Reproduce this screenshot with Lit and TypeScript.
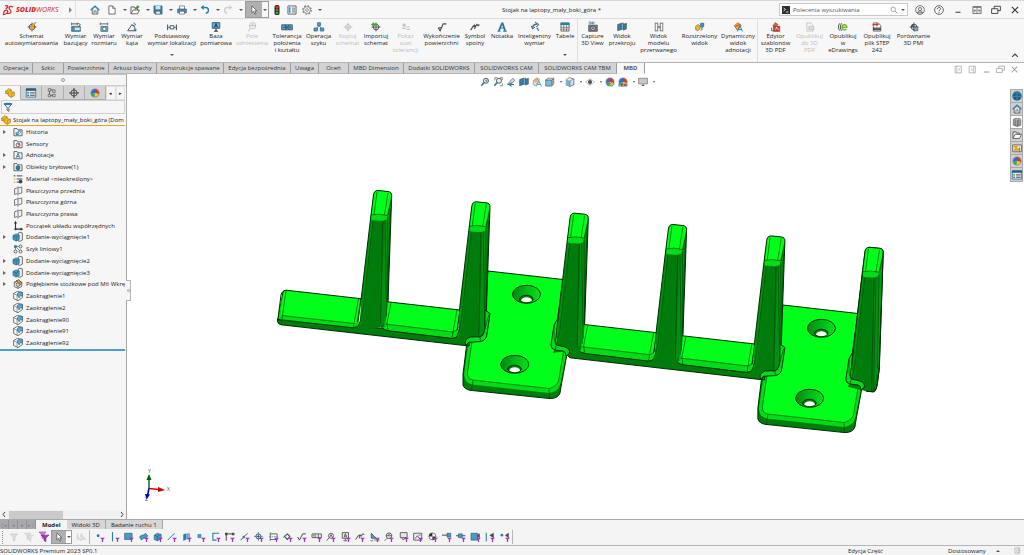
import { LitElement, html, svg, css, nothing } from "lit";
import { customElement, property, state } from "lit/decorators.js";

const D = "#4b4b4d";
const B = "#2b7ea6";
const L = "#8fc4de";
const Y = "#f3b72c";
const P = "#a435c4";
const G = "#b9b9bb";

const funnel = svg`<path d="M8 9h8l-3 3v4h-2v-4z" fill=${P}/>`;
const ball = svg`<circle cx="8" cy="8" r="6.5" fill="#e8e8e8"/><path d="M8 8V1.500A6.500 6.500 0 0 0 2 10z" fill="#2f6fd0"/><path d="M8 8V1.500A6.500 6.500 0 0 1 14 10z" fill="#e3322b"/><path d="M8 8l6 2a6.500 6.500 0 0 1-7 4.500z" fill="#f6c928"/><path d="M8 8l-1 6.500A6.500 6.500 0 0 1 2 10z" fill="#37a845"/><circle cx="8" cy="8" r="6.500" fill="none" stroke="#555" stroke-width=".8"/>`;
const magnifier = svg`<circle cx="9.500" cy="6" r="4" fill="#e8f3f9" stroke=${D} stroke-width="1.500"/><path d="M6.500 9L2 14" stroke=${B} stroke-width="2.500"/>`;
const folder = svg`<path d="M1.500 14V2.500h5l1.500 2h6.500V14z" fill="#f4f4f4" stroke=${D} stroke-width="1.300"/>`;
const cube = svg`<path d="M2 5l6-3 6 3v7l-6 3-6-3z" fill="#f1f1f1" stroke=${D} stroke-width="1.200"/><path d="M2 5l6 3 6-3M8 8v7" fill="none" stroke=${D}/>`;
const arrows = svg`<path d="M8 1v14M1 8h14" stroke=${D} stroke-width="1.500"/><circle cx="8" cy="8" r="4.500" fill="none" stroke=${D} stroke-width="1.500"/>`;
const page = svg`<path d="M3 1.500h6l4 4v9H3z" fill="#fafafa" stroke=${D} stroke-width="1.200"/><path d="M9 1.500v4h4" fill="none" stroke=${D}/>`;

const ICONS: Record<string, unknown> = {
  home: svg`<path d="M3.500 7v7.500h9V7" fill="#e6e6e6" stroke=${D} stroke-width="1.200"/><path d="M1 8.500L8 2l7 6.500" fill="none" stroke=${B} stroke-width="2.200"/><path d="M6.500 14.500V9.500h3v5" fill="#fff" stroke=${D}/>`,
  page,
  open: svg`<path d="M1.500 14V3h5l1 2H12v3" fill="#f4f4f4" stroke=${D} stroke-width="1.300"/><path d="M1.500 14L5 8h10l-3 6z" fill="#fff" stroke=${D} stroke-width="1.300"/><path d="M9 7c0-3 1-4 4-4M11 1l3 2-3 2.500" fill="none" stroke="#3a9b35" stroke-width="1.800"/>`,
  save: svg`<path d="M1.500 1.500h13v13h-11l-2-2z" fill=${B} stroke="#30566a"/><path d="M4 1.500h8V7H4z" fill="#cfe5f0"/><path d="M4.500 10h7v4.500h-7z" fill="#f2f2f2" stroke=${D} stroke-width=".8"/>`,
  print: svg`<path d="M4 1.500h8V7H4z" fill="#fff" stroke=${D}/><path d="M1 6.500h14v6H1z" fill="#3c91b9" stroke="#30566a"/><path d="M4 10h8v4.500H4z" fill="#fff" stroke=${D}/>`,
  undo: svg`<path d="M5 4h4c6 0 6 9 0 9" fill="none" stroke=${B} stroke-width="2.200"/><path d="M6 0v8L1 4z" fill=${B}/>`,
  redo: svg`<path d="M11 4H7c-6 0-6 9 0 9" fill="none" stroke="#d0d0d2" stroke-width="2.200"/><path d="M10 0v8l5-4z" fill="#d0d0d2"/>`,
  cursor: svg`<path d="M4.500 1.500v11l2.700-2.500 2 4.500 2-1-2-4.200h3.500z" fill="#fff" stroke=${D} stroke-width="1.100"/>`,
  traffic: svg`<rect x="4" y="0" width="8" height="16" rx="3" fill="#2c2c2c"/><circle cx="8" cy="3.500" r="2.300" fill="#e03127"/><circle cx="8" cy="8" r="2.100" fill="#8a6d1a"/><circle cx="8" cy="12.500" r="2.300" fill="#35b13c"/>`,
  props: svg`<path d="M1.500 1.500h13v13h-13z" fill="#f6f6f6" stroke=${D} stroke-width="1.300"/><path d="M2 2h4v12H2z" fill=${L}/><path d="M3 5h2M3 8h2M3 11h2" stroke="#23617f" stroke-width="1.500"/><path d="M8 5h5M8 8h5M8 11h5" stroke=${D} stroke-width="1.200"/>`,
  manager: svg`<path d="M.500 1h15v13.500H.500z" fill="#f6f6f6" stroke="#23617f" stroke-width="1.200"/><path d="M0 1h16v3.500H0z" fill="#23617f"/><path d="M2 7h3M2 9.500h3M2 12h3" stroke=${B} stroke-width="1.600"/><path d="M6.500 7H14M6.500 9.500H14M6.500 12H14" stroke=${D} stroke-width="1.200"/>`,
  gear: svg`<circle cx="8" cy="8" r="6.700" fill="none" stroke="#77777a" stroke-width="2" stroke-dasharray="2.900 2.360"/><circle cx="8" cy="8" r="5.400" fill="#fff" stroke="#77777a" stroke-width="1.200"/><circle cx="8" cy="8" r="2.200" fill="none" stroke="#77777a" stroke-width="1.200"/>`,
  prompt: svg`<path d="M0 0h16v16H0z" fill="#2f2f33"/><path d="M3 4l4 3-4 3M8 12h5" fill="none" stroke="#fff" stroke-width="1.600"/>`,
  search: svg`<circle cx="6.500" cy="6.500" r="4.500" fill="none" stroke="#77777a" stroke-width="1.300"/><path d="M10 10l5 5" stroke="#77777a" stroke-width="1.500"/>`,
  user: svg`<circle cx="8" cy="8" r="7" fill="none" stroke=${D} stroke-width="1.200"/><circle cx="8" cy="6.500" r="2.500" fill="none" stroke=${D} stroke-width="1.200"/><path d="M4 12.500c0-4 8-4 8 0z" fill="none" stroke=${D} stroke-width="1.200"/>`,
  help: svg`<circle cx="8" cy="8" r="7" fill="none" stroke=${D} stroke-width="1.300"/><path d="M5.500 6.500c0-3.500 5-3.500 5-.5 0 2-2.500 1.800-2.500 4M8 11.500v1.500" fill="none" stroke=${D} stroke-width="1.500"/>`,
  min: svg`<path d="M3 12.500h10" stroke="currentColor" stroke-width="2"/>`,
  span: svg`<path d="M1.500 2.500h13v11h-13z" fill="none" stroke=${D} stroke-width="1.200"/><path d="M2 4h12" stroke=${D}/><path d="M8 4v9.500M3 9h4M9 9h4M5 7L3 9l2 2M11 7l2 2-2 2" fill="none" stroke=${D}/>`,
  cascade: svg`<path d="M5 6V2h10v7h-4" fill="none" stroke="currentColor" stroke-width="1.400"/><path d="M1 6h10v7.500H1z" fill="none" stroke="currentColor" stroke-width="1.400"/>`,
  close: svg`<path d="M3 3l10 10M13 3L3 13" stroke="currentColor" stroke-width="1.800"/>`,
  dockL: svg`<path d="M2 2h11v12H2z" fill="none" stroke="currentColor" stroke-width="1.300"/><path d="M5 2v12M11 5.500L8 8l3 2.500" fill="none" stroke="currentColor" stroke-width="1.200"/>`,
  dockR: svg`<path d="M2 2h11v12H2z" fill="none" stroke="currentColor" stroke-width="1.300"/><path d="M10 2v12M5 5.500L8 8l-3 2.500" fill="none" stroke="currentColor" stroke-width="1.200"/>`,
  auto: svg`${arrows}<path d="M15 0L6 5l3 3z" fill=${Y} stroke="#9b5f0c" stroke-width=".6"/><path d="M9 4l-4 6h3l-2 6 6-8H9l3-5z" fill="#f4a51e"/>`,
  dimBase: svg`<path d="M1 3h9M1 1v4M10 1v4" stroke=${D} stroke-width="1.400"/><path d="M1 7h14v8H1z" fill="#3f93ba" stroke=${D}/><path d="M6 9h8v4H6z" fill="#d4e8f2"/><path d="M11 2l4 2-3 3" fill="none" stroke=${D} stroke-width="1.300"/>`,
  dimSize: svg`<path d="M2 3h12M2 1v4M14 1v4" stroke=${D} stroke-width="1.300"/><path d="M3 7h11v8H3z" fill="#6fb1cf" stroke=${D}/><circle cx="8.500" cy="11" r="2.800" fill="#fff" stroke="#23617f" stroke-width="1.300"/>`,
  dimAngle: svg`<path d="M1 14L8 4M1 14h14" stroke=${D} stroke-width="1.500"/><path d="M7 5c5 0 6 4 6 8" fill="none" stroke=${B} stroke-width="1.700"/><path d="M10 1l4 3-4 2M11 11l2 3 2-3" fill="none" stroke=${D} stroke-width="1.200"/>`,
  dimLoc: svg`<path d="M1 4v9M15 4v9" stroke=${D} stroke-width="1.600"/><path d="M1 8.500h4M11 8.500h4" stroke=${B} stroke-width="1.500"/><path d="M5 6h6v5H5z" fill="#fff" stroke=${D} stroke-width="1.500"/>`,
  datum: svg`<path d="M2 1h12v9H2z" fill="#6db0d0" stroke="#23617f" stroke-width="1.500"/><path d="M8 2.500L5.500 9M8 2.500L10.500 9M6.500 6.500h3" stroke="#223" stroke-width="1.300"/><path d="M8 10v3" stroke=${D} stroke-width="1.500"/><path d="M4 15.500h8l-4-4z" fill=${D}/>`,
  target: svg`<circle cx="9" cy="6" r="5" fill="none" stroke=${G} stroke-width="1.300"/><path d="M4 6h10M9 3v3M5 10l-3 5" stroke=${G} stroke-width="1.500"/>`,
  gtol: svg`<path d="M-.500 4.500h17v8h-17z" fill="#5ba6ca" stroke="#2c4c5c" stroke-width="1.300"/><path d="M5.500 4.500v8M11 4.500v8M1.500 8.500h3M7 6.500v4M8.500 6.500v4M12.500 7l1.500 3" stroke="#27414f" stroke-width="1.100"/>`,
  pattern: svg`<path d="M5.500 1h5v5h-5zM0 9.500h5.500v5H0zM10 9.500h5.500v5H10z" fill="#4b9bc1" stroke="#23617f"/><path d="M8 6L4 10M8 6l4 4" stroke=${D} stroke-width="1.300"/>`,
  copyS: svg`<path d="M8 1v14M1 8h14" stroke=${G} stroke-width="1.300"/><circle cx="8" cy="8" r="4" fill="none" stroke=${G} stroke-width="1.300"/>`,
  importS: svg`${arrows}<path d="M0 4l5-4v2.500h5v3H5V8z" fill="#35a92e"/>`,
  tolState: svg`<path d="M2 5h6M5 2v6M2 10h6M9 12h5M9 8h5" stroke=${G} stroke-width="1.700"/>`,
  finish: svg`<path d="M2 9l3 5 5-11h5" fill="none" stroke=${D} stroke-width="1.900"/><path d="M3 9h5" stroke=${D} stroke-width="1.400"/>`,
  weld: svg`<path d="M1 13l4-6h4l-2 4M5 7l2-2 2 2 2-3 2 2 2-2" fill="none" stroke=${D} stroke-width="1.800"/>`,
  note: svg`<path d="M8.500 1L3 14M8.500 1L13 14" stroke="#24779f" stroke-width="2.800"/><path d="M5 9.500h6M1 14.500h4.500M10 14.500h5.500" stroke="#24779f" stroke-width="1.800"/>`,
  smart: svg`<path d="M4 9C5 5 8 3 12 4" fill="none" stroke=${B} stroke-width="2.200"/><path d="M8 0l6 4-4 4M2 6l2 5 4-3" fill="none" stroke=${D} stroke-width="1.500"/><path d="M11 9l3 5" stroke=${B} stroke-width="2"/>`,
  table: svg`<path d="M1.500 1.500h13v13h-13z" fill="#fff" stroke=${D} stroke-width="1.200"/><path d="M1 1h14v4H1z" fill=${B}/><path d="M6 5v9.500M10.500 5v9.500M1.500 8.500h13M1.500 11.500h13" stroke=${D}/>`,
  camera: svg`<path d="M1 5h14v10H1z" fill="#77777a" stroke=${D}/><circle cx="8" cy="10" r="3.500" fill="#e9e9e9" stroke="#333" stroke-width="1.200"/><circle cx="8" cy="10" r="1.500" fill="#444"/><path d="M1 0h4v3H1M7 0h2l1 1.500L9 3H7z" fill="none" stroke=${B} stroke-width="1.300"/>`,
  section: svg`<path d="M1 4l6-2v10l-6 2z" fill="#2f7fa6" stroke=${D}/><path d="M7 2h4v8l-4 2z" fill="#7ebbd7" stroke=${D}/><path d="M10 4l5-2v9l-5 2z" fill="#2f7fa6" stroke=${D}/>`,
  broken: svg`<path d="M2 1v14M6 1v14M2 2h4M2 14h4M10 1v14M14 1v14M10 2h4M10 14h4M5 6l6 4M5 10l6-4" fill="none" stroke="#6a6a6c" stroke-width="1.300"/>`,
  explode: svg`<path d="M1 7l4-3 3 2v5l-4 3-3-2z" fill=${Y} stroke="#7a5a10"/><path d="M9 2h5v5l-2 2-3-2z" fill="#3f93ba" stroke="#1e556e"/><path d="M9 9l3 2-3 3" fill="none" stroke=${D} stroke-width="1.300"/>`,
  dynView: svg`<path d="M2 6l6-5 5 4-6 8z" fill="#f7a832" stroke="#8a4b12"/><path d="M4 7l7-3" stroke="#d13c2f" stroke-width="1.500"/><path d="M11 6L7 15M11 6l4 9M9 12h4" stroke=${B} stroke-width="1.600"/>`,
  hudView: svg`<path d="M2 6l6-5 4 3-7 10-3-2z" fill="#ececec" stroke="#77777a"/><path d="M3 7l6-5" stroke="#f0a02c" stroke-width="2"/><path d="M5 9l5-6" stroke="#d8584b" stroke-width="1.300"/><path d="M11 6L7 15M11 6l4 9M9 12h4" stroke="#4b9bc1" stroke-width="1.500"/>`,
  pdf: svg`<path d="M3 6l4-5 4 3-3 5z" fill="#d96b2c" stroke="#70370f"/><path d="M4 7h10v8H4z" fill="#d9362e" stroke=${D}/><path d="M6 12c3-1 4-4 3-4s0 3 4 4" fill="none" stroke="#fff" stroke-width="1.200"/><path d="M1 9v5h3" fill="none" stroke=${D} stroke-width="1.300"/>`,
  pdfOff: svg`<path d="M3 1.500h6l4 4v9H3z" fill="none" stroke=${G} stroke-width="1.200"/><path d="M6 7h8v5H6z" fill="#dedede" stroke=${G}/>`,
  edraw: svg`<path d="M3 2C0 5 0 11 3 14M6 2C3 5 3 11 6 14" fill="none" stroke=${D} stroke-width="1.500"/><path d="M7 8.500h7c0-6-8-5-7.500.5.500 4.500 5 4 7 2.500" fill="none" stroke="#74b72a" stroke-width="2.400"/>`,
  step: svg`<path d="M2 1.500h8l4 4v9H2z" fill="#f7f7f7" stroke=${D} stroke-width="1.200"/><path d="M1 3h6V1l4 3-4 3V5H1z" fill="#db2f28"/><path d="M2 9h12v4H2z" fill="#333"/><path d="M4 11h8" stroke="#fff" stroke-dasharray="2 1"/>`,
  compare: svg`${arrows}<path d="M8 8h6v6H8z" fill="#6db0d0" stroke=${D}/><circle cx="6" cy="6" r="2.500" fill="#555"/>`,
  part: svg`<path d="M1 5l5-4 4 2v3l5 1v5l-5 3-5-3V9L1 9z" fill="#f5bd2d" stroke="#8d6a12"/><path d="M1 5l4 2 5-4M5 7v3M10 9l5-2M10 9v6" fill="none" stroke="#a87c14"/>`,
  config: svg`<path d="M2 1h4v4H2zM2 10h4v4H2zM9 3h4v4H9zM9 10h4v4H9z" fill="#d6d6d6" stroke=${D}/><path d="M6 3h3M4 5v5M6 12h3" stroke=${D} stroke-width="1.300"/>`,
  cross: svg`<circle cx="8" cy="8" r="5" fill="none" stroke="#333" stroke-width="1.300"/><path d="M8 0v16M0 8h16" stroke="#333" stroke-width="1.500"/>`,
  ball,
  filter: svg`<path d="M1.500 3l13 0-5 5.500V15L6.500 13V8.500z" fill="#d9edf6" stroke=${D} stroke-width="1.300"/><ellipse cx="8" cy="3" rx="6.500" ry="1.800" fill=${B}/>`,
  fHist: svg`${folder}<path d="M6 11l5-5M5 8v4h4" stroke=${B} stroke-width="1.600" fill="none"/><circle cx="10" cy="8" r="2.500" fill="none" stroke=${B}/>`,
  fSens: svg`${folder}<circle cx="8" cy="9.500" r="3" fill="#fff" stroke=${D} stroke-width="1.300"/><path d="M8 9.500l3-2" stroke="#e33" stroke-width="1.700"/>`,
  fAnn: svg`${folder}<path d="M8 5.500L5 12.500M8 5.500l3 7M6.500 10.500h3" stroke=${B} stroke-width="1.500"/>`,
  fBody: svg`${folder}<path d="M5 7l3-1.500L11 7v4l-3 2-3-2z" fill="#2b7ea6" stroke="#1d4a60"/>`,
  material: svg`<path d="M1 2h3v2H1z" fill=${B}/><path d="M1 7h3v2H1z" fill=${Y}/><path d="M1 12h3v2H1z" fill=${Y}/><path d="M6 3h9M6 8h9M6 13h5" stroke=${D} stroke-width="1.600"/><circle cx="12" cy="12" r="3" fill="#444"/>`,
  plane: svg`<path d="M7 3L2.500 4.500v9L7 12M9 3l5-1.500v9.500l-5 1.500M8 .500v15" fill="none" stroke="#5c5c5e" stroke-width="1.300"/>`,
  origin: svg`<path d="M4 1v12h11" fill="none" stroke="#333" stroke-width="1.800"/><path d="M1.500 4L4 0l2.500 4zM12 10.500l4 2.500-4 2.500z" fill="#333"/><circle cx="4" cy="13" r="1.700" fill="#333"/>`,
  boss: svg`<path d="M8 2l3-1.500 4 1V13l-4 2-3-1z" fill="#f0f0f0" stroke=${D} stroke-width="1.200"/><path d="M0 5.500l5-2.500 5 2V12l-5 2.500L0 12z" fill="#4b9bc1" stroke="#1e5b78"/><path d="M0 5.500L5 8l5-3M5 8v6.500" fill="none" stroke="#1e5b78"/>`,
  linPat: svg`<circle cx="4" cy="4" r="2.600" fill=${B}/><circle cx="12" cy="4" r="2.400" fill="#ededed" stroke=${D} stroke-width="1.300"/><circle cx="4" cy="12" r="2.400" fill="#ededed" stroke=${D} stroke-width="1.300"/><circle cx="12" cy="12" r="2.400" fill="#ededed" stroke=${D} stroke-width="1.300"/><path d="M4 6v3M6.500 4h3M6 6l4 4" stroke=${D}/>`,
  hole: svg`${cube}<circle cx="8" cy="9" r="3" fill="#cfcfcf" stroke=${D}/><path d="M5 3l4-2 5 6-2 2z" fill="#f3a62c" stroke="#333"/>`,
  fillet: svg`<path d="M1 4l6-3.500 8 2v8l-7 5-7-3.500z" fill="#f6f6f6" stroke=${D} stroke-width="1.200"/><path d="M6.500 6.500c0-4 3.500-5.500 8.500-4.500v6c-3-1-5 0-5 3z" fill="#5ba6ca" stroke="#23617f"/><path d="M1 4l5.500 3v8" fill="none" stroke=${D} stroke-width=".8"/>`,
  zoomFit: svg`${magnifier}<path d="M10 4v4M8 6h4" stroke=${B}/>`,
  zoomArea: svg`${magnifier}<path d="M3 5V1h4M12 1h3v4M15 10v4h-4" fill="none" stroke=${D}/>`,
  zoomPrev: svg`<path d="M3 11l8-9 3 3-7 8z" fill="#dcdcdc" stroke=${D}/><path d="M2 12h11M9 9l-4 3 4 3" fill="none" stroke=${B} stroke-width="1.800"/>`,
  orient: svg`<path d="M1 5l3-3h10l-3 3z" fill="#fff" stroke=${D}/><path d="M11 5l3-3v9l-3 3z" fill="#d1d1d1" stroke=${D}/><path d="M1 5h10v9.500H1z" fill="#7dbbd8" stroke="#23617f"/>`,
  display: svg`<path d="M2 4l5-3 7 2v9l-6 3-6-2z" fill="#f1f1f1" stroke=${D}/><path d="M2 4l6 2v9l-6-2z" fill="#72b5d5"/><path d="M8 6l6-3v9l-6 3z" fill="#c9e3ef" stroke=${D} stroke-width=".7"/>`,
  eye: svg`<path d="M1 8c4-5 10-5 14 0-4 5-10 5-14 0z" fill="#fff" stroke="#999"/><circle cx="8" cy="8" r="3.200" fill="#444"/><path d="M8 2v12" stroke="#777"/>`,
  appear: svg`${ball}<path d="M11 7l4 4-4 4-3-3z" fill="#bbb" stroke=${D} stroke-width=".7"/>`,
  scene: svg`${ball}<path d="M1 11h14v4H1z" fill="#555"/><path d="M2 13h3M7 13h3M12 13h2" stroke="#eee" stroke-width="1.500"/>`,
  monitor: svg`<path d="M1 2h14v9H1z" fill="#c8c8ca" stroke="#777" stroke-width="1.200"/><path d="M5 14.500h6l-3-3z" fill="#555"/>`,
  globe: svg`<circle cx="8" cy="8" r="7.500" fill="#1f6288"/><path d="M2 5c3-3 9-3 12 0M1 8.500h14M8 1v14" fill="none" stroke="#4b97bd"/>`,
  library: svg`<path d="M2 4l4-2 3 1 3-1 2 2v9l-5 2-7-2z" fill="#b8b8b8" stroke=${D}/><path d="M5 4v10M8.500 5v10M11 4v10" stroke=${D} stroke-width="1.200"/>`,
  explorer: svg`<path d="M1.500 13V3h5l1 2H12v2" fill="#eee" stroke=${D} stroke-width="1.300"/><path d="M1.500 13.500L5 7h10l-3 6.500z" fill="#fff" stroke=${D} stroke-width="1.300"/>`,
  palette: svg`<path d="M1 3h14v11H1z" fill="#ececec" stroke=${D} stroke-width="1.200"/><path d="M3 4.500h7v2H8v2h3v4H3v-3h2v-2H3z" fill="#dfa413"/><path d="M12 7v7" stroke=${D}/>`,
  fOff: svg`<path d="M2 3h12L9.500 8v6h-3V8z" fill="#ddd" stroke="#c8c8ca"/>`,
  fOff2: svg`<path d="M1 2h10L7 7v5H5V7zM6 5h9l-4 4v6l-2-1V9z" fill="#e2e2e2" stroke="#c8c8ca"/>`,
  fOn: svg`<path d="M0 0h11L7 5v5H5V5z" fill="#c98bdd" stroke=${P}/><path d="M3 5h13l-5 4v6.500l-3-2V9z" fill=${P} stroke="#6d2484"/>`,
  selOff: svg`<path d="M2 2v10l3-2 2 4M8 3v11l3-3 4 1z" fill="#e2e2e2" stroke="#c8c8ca" stroke-width="1.200"/>`,
  bVertex: svg`<circle cx="5" cy="6" r="2.300" fill=${B}/>${funnel}`,
  bEdge: svg`<path d="M4 0v15" stroke=${B} stroke-width="1.800"/>${funnel}`,
  bFace: svg`<path d="M1 2h12v10H1z" fill="#4b9bc1" stroke="#1e5b78"/>${funnel}`,
  bSurf: svg`<path d="M1 8c3-6 6 0 9-6l4 4c-3 6-7 2-10 7z" fill="#4b9bc1" stroke="#1e5b78"/>${funnel}`,
  bBody: svg`<path d="M2 5l5-3 6 2v7l-6 3-5-2z" fill="#4b9bc1" stroke="#1e5b78"/><path d="M2 5l5 2 6-3M7 7v7" fill="none" stroke="#1e5b78"/>${funnel}`,
  bAxis: svg`<path d="M1 13L12 2" stroke=${B} stroke-width="1.600"/>${funnel}`,
  bPlane: svg`<path d="M2 4l5-2v10l-5 2z" fill=${B}/><path d="M8 3h4v8H8z" fill=${L} stroke=${B}/>${funnel}`,
  bPoint: svg`<path d="M3 4h5v5H3z" fill="#4b9bc1" stroke=${B}/>${funnel}`,
  bSketch: svg`<path d="M13 2H3v11h6" fill="none" stroke=${B} stroke-width="1.700"/>${funnel}`,
  bSeg: svg`<path d="M2 14V3h11" fill="none" stroke=${D} stroke-width="1.600"/><path d="M0 1h4v4H0zM11 1h4v4h-4z" fill=${D}/>${funnel}`,
  bMid: svg`<path d="M1 13L12 2" stroke=${D} stroke-width="1.500"/><circle cx="6" cy="8" r="2" fill=${B}/>${funnel}`,
  bCenter: svg`<circle cx="7" cy="7" r="4" fill="none" stroke=${D} stroke-width="1.500"/><path d="M7 0v14M0 7h14" stroke=${B} stroke-width="1.300"/><circle cx="7" cy="7" r="1.500" fill=${D}/>${funnel}`,
  bCline: svg`<path d="M2 1v13M2 3h11v9H2" fill="none" stroke=${D} stroke-width="1.300"/><path d="M0 7.500h14" stroke=${B} stroke-dasharray="3 1"/>${funnel}`,
  bDim: svg`<path d="M2 7l5-4 4 4-4 5z" fill="none" stroke=${D} stroke-width="1.700"/><path d="M1 9l6-6" stroke=${B} stroke-width="1.500"/>${funnel}`,
  bFin: svg`<path d="M1 8l3 5 5-10h5" fill="none" stroke=${D} stroke-width="1.600"/>${funnel}`,
  bGtol: svg`<path d="M0 3h15v6H0zM5 3v6M10 3v6M1.500 6h2" fill="#eee" stroke=${D} stroke-width="1.300"/>${funnel}`,
  bMag: svg`<circle cx="8" cy="6" r="4" fill="none" stroke=${D} stroke-width="1.300"/><path d="M5 9l-4 5M6 8l2-4 2 4" fill="none" stroke=${D} stroke-width="1.300"/>${funnel}`,
  bNote: svg`<path d="M2 1h10v9H2z" fill="#eee" stroke=${D} stroke-width="1.400"/><path d="M5 8.500l2-6 2 6M5 6.500h4M7 10v4M4 14h6" fill="none" stroke=${D} stroke-width="1.300"/>${funnel}`,
  bWeld: svg`<path d="M1 12l4-6h3l-1 4M6 6l2-2 2 3 2-4 3 1" fill="none" stroke=${D} stroke-width="1.600"/>${funnel}`,
  bAng: svg`<path d="M2 2v8h8zM1 14h4" fill="#4b9bc1" stroke=${D} stroke-width="1.200"/><path d="M7 12h8M7 14h8" stroke=${D} stroke-dasharray="2 1"/>${funnel}`,
  bDatum: svg`<circle cx="8" cy="6" r="4.500" fill="#eee" stroke=${D} stroke-width="1.300"/><path d="M3 6h10M8 2v4M5 10l-4 4" stroke=${D} stroke-width="1.300"/>${funnel}`,
  bCosm: svg`<path d="M2 1h11v8H2zM4 9l3 4 3-4" fill="#e7e7e7" stroke=${D} stroke-width="1.300"/>${funnel}`,
  bBlock: svg`<path d="M1 2h13v11H1z" fill="#eee" stroke=${D} stroke-width="1.300"/><path d="M3 11l4-5 3 4M9 5h3" fill="none" stroke=${D} stroke-width="1.300"/>${funnel}`,
  bMass: svg`<circle cx="7" cy="7" r="5.500" fill="#fff" stroke="#333"/><path d="M7 7V1.500A5.500 5.500 0 0 0 1.500 7zM7 7v5.500A5.500 5.500 0 0 0 12.500 7z" fill="#333"/>${funnel}`,
  bConn: svg`<path d="M0 5h8" stroke=${D} stroke-width="1.600"/><path d="M8 2h6v6H8z" fill="#4b9bc1" stroke="#1e5b78"/>${funnel}`,
  bRoute: svg`<path d="M0 6h15" stroke=${D} stroke-width="1.600"/><path d="M4 3h6v6H4z" fill="#4b9bc1" stroke="#1e5b78"/>${funnel}`,
  bMeshF: svg`<path d="M0 2h11v11H0z" fill="#4b9bc1" stroke="#1e5b78"/><path d="M14 2l-5 4 5 4z" fill=${D}/>${funnel}`,
  bMeshE: svg`<path d="M2 1v14" stroke=${B} stroke-width="1.700"/><path d="M14 1L7 5l7 5z" fill=${D}/>${funnel}`,
  bMeshV: svg`<circle cx="3" cy="5" r="2.200" fill=${B}/><path d="M14 1L8 5l6 5z" fill=${D}/>${funnel}`,
};

const icon = (name: string) =>
  html`<svg class="ic" viewBox="0 0 16 16" aria-hidden="true">${ICONS[name]}</svg>`;

const shared = css`
  *, :host { box-sizing: border-box; }
  button {
    font: inherit; color: inherit; background: none; border: 0; padding: 0; margin: 0;
    display: flex; align-items: center; justify-content: center;
  }
  .ic { width: 10px; height: 10px; flex: none; display: block; overflow: visible; }
  .caret {
    width: 0; height: 0; flex: none;
    border: 2px solid transparent; border-top-color: #555; border-bottom: 0;
  }
`;

interface Cmd { i: string; t: string[]; w: number; off?: boolean; menu?: boolean; end?: boolean }

const COMMANDS: Cmd[] = [
  { i: "auto", t: ["Schemat", "autowymiarowania"], w: 59 },
  { i: "dimBase", t: ["Wymiar", "bazujący"], w: 29 },
  { i: "dimSize", t: ["Wymiar", "rozmiaru"], w: 28 },
  { i: "dimAngle", t: ["Wymiar", "kąta"], w: 28 },
  { i: "dimLoc", t: ["Podstawowy", "wymiar lokalizacji"], w: 52, menu: true },
  { i: "datum", t: ["Baza", "pomiarowa"], w: 36 },
  { i: "target", t: ["Pole", "odniesienia"], w: 36, off: true },
  { i: "gtol", t: ["Tolerancja", "położenia", "i kształtu"], w: 34 },
  { i: "pattern", t: ["Operacja", "szyku"], w: 29 },
  { i: "copyS", t: ["Kopiuj", "schemat"], w: 29, off: true },
  { i: "importS", t: ["Importuj", "schemat"], w: 28 },
  { i: "tolState", t: ["Pokaż", "stan", "tolerancji"], w: 31, off: true },
  { i: "finish", t: ["Wykończenie", "powierzchni"], w: 41 },
  { i: "weld", t: ["Symbol", "spoiny"], w: 26 },
  { i: "note", t: ["Notatka"], w: 28 },
  { i: "smart", t: ["Inteligentny", "wymiar"], w: 37 },
  { i: "table", t: ["Tabele"], w: 25, menu: true, end: true },
  { i: "camera", t: ["Capture", "3D View"], w: 29 },
  { i: "section", t: ["Widok", "przekroju"], w: 30 },
  { i: "broken", t: ["Widok", "modelu", "przerwanego"], w: 43 },
  { i: "explode", t: ["Rozstrzelony", "widok"], w: 39 },
  { i: "dynView", t: ["Dynamiczny", "widok", "adnotacji"], w: 39, end: true },
  { i: "pdf", t: ["Edytor", "szablonów", "3D PDF"], w: 35 },
  { i: "pdfOff", t: ["Opublikuj", "do 3D", "PDF"], w: 33, off: true },
  { i: "edraw", t: ["Opublikuj", "w", "eDrawings"], w: 34 },
  { i: "step", t: ["Opublikuj", "plik STEP", "242"], w: 34 },
  { i: "compare", t: ["Porównanie", "3D PMI"], w: 39 },
];

@customElement("sw-titlebar")
class SwTitlebar extends LitElement {
  static styles = [shared, css`
    :host {
      display: grid; grid-template-columns: 324px 1fr 245px; align-items: center;
      height: 19px; background: #f7f7f7; border-top: 1px solid #d8d8d8; border-bottom: 1px solid #dcdcdc;
    }
    .left, .right, .brand, .combo { display: flex; align-items: center; }
    .left { height: 17px; }
    .brand { width: 76px; height: 100%; padding-left: 2px; border-right: 1px solid #e2e2e2; color: #dc2b2b; }
    .ds { width: 12px; height: 12px; margin-right: 2px; }
    .word { font-size: 7px; font-style: italic; width: 50px; white-space: nowrap; }
    .word b { font-weight: 800; }
    .play { border: 3px solid transparent; border-left: 3px solid #888; border-right: 0; margin-left: 3px; }
    .home { width: 29px; padding-left: 8px; }
    .menus { display: grid; grid-template-columns: repeat(6, 1fr); width: 140px; }
    .combo { gap: 6px; justify-content: center; }
    .select { display: flex; height: 17px; width: 24px; border: 1px solid #9a9a9a; }
    .select .main { background: #b0b0b0; width: 16px; }
    .select .drop { flex: 1; }
    .tail { display: flex; gap: 5px; padding-left: 3px; }
    .title { text-align: center; font-size: 6px; white-space: nowrap; }
    .search { display: flex; align-items: center; width: 129px; height: 13px; background: #fff; border: 1px solid #c9c9c9; padding: 0 2px; gap: 3px; }
    .search .ic { width: 8px; height: 8px; }
    input { flex: 1; min-width: 0; border: 0; padding: 0; outline: 0; font: inherit; font-size: 6px; background: none; color: #333; }
    input::placeholder { color: #555; opacity: 1; }
    .win { flex: 1; display: grid; grid-template-columns: repeat(6, 1fr); color: #333; padding-left: 2px; }
    .win .min .ic { width: 8px; height: 8px; }
  `];
  render() {
    const menus: [string, string][] = [["page", "Nowy"], ["open", "Otwórz"], ["save", "Zapisz"], ["print", "Drukuj"], ["undo", "Cofnij"], ["redo", "Ponów"]];
    const win: [string, string][] = [["user", "Zaloguj"], ["help", "Pomoc"], ["min", "Minimalizuj"], ["span", "Rozszerz"], ["cascade", "Przywróć"], ["close", "Zamknij"]];
    return html`
      <div class="left">
        <div class="brand">
          <svg class="ds" viewBox="0 0 16 16" aria-hidden="true"><path d="M4 2.500c5-1 5 1 1 4M1 14c5 0 8-3 6-5.500Q6 7.500 3 9.500L2 13M15 4c-5-2-7 1-4.500 3.500s2 5-1.500 5-3 0-3 0" fill="none" stroke="#dc2b2b" stroke-width="1.700"/></svg>
          <span class="word"><b>SOLID</b>WORKS</span>
          <span class="play"></span>
        </div>
        <button class="home" aria-label="Strona główna">${icon("home")}</button>
        <div class="menus">${menus.map(([i, l]) => html`<button class="combo" aria-label=${l}>${icon(i)}<span class="caret"></span></button>`)}</div>
        <div class="select">
          <button class="main" aria-label="Wybierz">${icon("cursor")}</button>
          <button class="drop" aria-label="Opcje wyboru"><span class="caret"></span></button>
        </div>
        <div class="tail">
          <button aria-label="Przebuduj">${icon("traffic")}</button>
          <button aria-label="Właściwości pliku">${icon("props")}</button>
          <button class="combo" aria-label="Opcje">${icon("gear")}<span class="caret"></span></button>
        </div>
      </div>
      <div class="title">Stojak na laptopy_mały_boki_góra *</div>
      <div class="right">
        <label class="search">${icon("prompt")}<input type="text" placeholder="Polecenia wyszukiwania" aria-label="Polecenia wyszukiwania">${icon("search")}<span class="caret"></span></label>
        <div class="win">${win.map(([i, l]) => html`<button class=${i} aria-label=${l}>${icon(i)}</button>`)}</div>
      </div>`;
  }
}

@customElement("sw-ribbon")
class SwRibbon extends LitElement {
  static styles = [shared, css`
    :host { display: grid; height: 43px; background: #f7f7f7; padding-left: 2px; font-size: 6px; line-height: 7px; }
    .cmd { flex-direction: column; justify-content: flex-start; padding: 3px 0; white-space: nowrap; min-width: 0; color: #222; }
    .cmd.off { color: #bcbcbe; }
    .cmd.end { border-right: 1px solid #dedede; }
    .cmd .ic { margin-bottom: 1px; }
    .cmd span { display: block; }
    .cmd .caret { margin-top: auto; margin-bottom: 3px; }
    .fold { align-items: flex-end; justify-content: flex-end; padding: 0 6px 5px 0; }
    .fold svg { width: 6px; height: 4px; }
  `];
  render() {
    const cols = COMMANDS.map((c) => `minmax(0, ${c.w}fr)`).join(" ") + " minmax(0, 91fr)";
    return html`<style>:host { grid-template-columns: ${cols}; }</style>
      ${COMMANDS.map((c) => html`<button class="cmd ${c.off ? "off" : ""} ${c.end ? "end" : ""}" ?disabled=${c.off}>
        ${icon(c.i)}${c.t.map((s) => html`<span>${s}</span>`)}${c.menu ? html`<i class="caret"></i>` : nothing}
      </button>`)}
      <button class="fold" aria-label="Zwiń wstążkę"><svg viewBox="0 0 6 4"><path d="M0 4l3-3 3 3" fill="none" stroke="#444" stroke-width="1.200"/></svg></button>`;
  }
}

@customElement("sw-tabs")
class SwTabs extends LitElement {
  @state() active = 12;
  static styles = [shared, css`
    :host {
      display: grid; height: 12px; border-top: 1px solid #b4b4b4; background: #fff; font-size: 6px;
      grid-template-columns: 33fr 31fr 45fr 48fr 67fr 67fr 28fr 30fr 55fr 71fr 64fr 78fr 28fr 379fr;
    }
    .tab { background: #d3d3d3; border-right: 1px solid #9d9d9d; border-bottom: 1px solid #b8b8b8; white-space: nowrap; min-width: 0; color: #333; }
    .tab.on { background: #f7f7f7; border-bottom-color: #f7f7f7; font-weight: 600; }
    .doc { display: flex; justify-content: flex-end; align-items: flex-end; gap: 5px; color: #a2a2a4; padding-right: 5px; }
    .doc .ic { width: 9px; height: 9px; }
  `];
  render() {
    const tabs = ["Operacje", "Szkic", "Powierzchnie", "Arkusz blachy", "Konstrukcje spawane", "Edycja bezpośrednia", "Uwaga", "Oceń", "MBD Dimension", "Dodatki SOLIDWORKS", "SOLIDWORKS CAM", "SOLIDWORKS CAM TBM", "MBD"];
    const doc: [string, string][] = [["dockL", "Zadokuj z lewej"], ["dockR", "Zadokuj z prawej"], ["min", "Minimalizuj dokument"], ["cascade", "Przywróć dokument"], ["close", "Zamknij dokument"]];
    return html`${tabs.map((t, i) => html`<button class="tab ${i === this.active ? "on" : ""}" @click=${() => (this.active = i)}>${t}</button>`)}
      <div class="doc">${doc.map(([i, l]) => html`<button aria-label=${l}>${icon(i)}</button>`)}</div>`;
  }
}

@customElement("sw-tree")
class SwTree extends LitElement {
  static styles = [shared, css`
    :host { display: flex; flex-direction: column; background: #f6f6f7; border-right: 1px solid #a8a8aa; border-top: 1px solid #c4c4c4; font-size: 6px; color: #222; min-height: 0; }
    .grip { height: 11px; display: flex; align-items: center; justify-content: center; border-bottom: 1px solid #cfcfcf; }
    .grip i, .handle i { width: 4px; height: 4px; border: 1px solid #999; border-radius: 50%; }
    .handle i { flex: none; width: 3px; height: 3px; }
    .modes { display: grid; grid-template-columns: repeat(5, 1fr) 19px; height: 14px; margin-right: 1px; }
    .modes button { background: #d2d2d3; border: 1px solid #aeaeb0; border-left: 0; border-top: 0; }
    .modes button.on { background: #f6f6f7; border-bottom-color: #f6f6f7; }
    .nudge { display: grid; grid-template-columns: 1fr 1fr; }
    .modes .nudge button { background: #f6f6f7; border: 1px solid #e0e0e0; font-size: 5px; }
    .filter { height: 14px; margin: 0 1px; border: 1px solid #d0d0d0; display: flex; align-items: center; padding-left: 1px; }
    .filter input { flex: 1; min-width: 0; height: 10px; border: 0; background: none; outline: 0; padding: 0; font: inherit; }
    .root { display: flex; align-items: center; gap: 2px; height: 12px; padding-left: 1px; white-space: nowrap; border-bottom: 1px solid #e5a520; margin-right: 1px; }
    ul { list-style: none; margin: 0; padding: 0; display: grid; grid-auto-rows: 1fr; height: 225px; border-bottom: 2px solid #4d9fd0; margin-right: 1px; }
    li { display: grid; grid-template-columns: 8px 11px 1fr; align-items: center; column-gap: 2px; padding-left: 3px; white-space: nowrap; min-width: 0; min-height: 0; }
    .tw { width: 0; height: 0; border: 2px solid transparent; border-left: 3px solid #666; border-right: 0; }
    .space { flex: 1; }
    .bar { height: 9px; display: flex; align-items: center; justify-content: space-between; background: #f1f1f1; padding: 0 2px; gap: 3px; }
    .track { flex: 1; height: 8px; }
    .thumb { width: 50%; height: 100%; background: #cacaca; }
    .bar svg { width: 4px; height: 5px; }
    .handle {
      position: absolute; left: 100%; top: 205px; width: 5px; height: 21px;
      background: #f6f6f7; border: 1px solid #b5b5b7; border-left: 0;
    }
    .wrap { position: relative; display: flex; flex-direction: column; flex: 1; min-height: 0; }
  `];
  render() {
    const rows: [string, string, boolean][] = [
      ["fHist", "Historia", true], ["fSens", "Sensory", false], ["fAnn", "Adnotacje", true], ["fBody", "Obiekty bryłowe(1)", true],
      ["material", "Materiał <nieokreślony>", false], ["plane", "Płaszczyzna przednia", false], ["plane", "Płaszczyzna górna", false],
      ["plane", "Płaszczyzna prawa", false], ["origin", "Początek układu współrzędnych", false], ["boss", "Dodanie-wyciągnięcie1", true],
      ["linPat", "Szyk liniowy1", false], ["boss", "Dodanie-wyciągnięcie2", true], ["boss", "Dodanie-wyciągnięcie3", true],
      ["hole", "Pogłębienie stożkowe pod M6 Wkrę", true], ["fillet", "Zaokrąglenie1", false], ["fillet", "Zaokrąglenie2", false],
      ["fillet", "Zaokrąglenie90", false], ["fillet", "Zaokrąglenie91", false], ["fillet", "Zaokrąglenie92", false],
    ];
    const modes: [string, string][] = [["part", "Drzewo operacji"], ["manager", "PropertyManager"], ["config", "ConfigurationManager"], ["cross", "DimXpertManager"], ["ball", "DisplayManager"]];
    return html`<div class="wrap">
      <div class="grip"><i></i></div>
      <div class="modes">${modes.map(([i, l], n) => html`<button class=${n ? "" : "on"} aria-label=${l}>${icon(i)}</button>`)}
        <div class="nudge"><button aria-label="Wstecz">◂</button><button aria-label="Dalej">▸</button></div></div>
      <label class="filter">${icon("filter")}<input type="text" aria-label="Filtr drzewa"></label>
      <div class="root">${icon("part")}<span>Stojak na laptopy_mały_boki_góra (Dom</span></div>
      <ul>${rows.map(([i, t, x]) => html`<li>${x ? html`<i class="tw"></i>` : html`<i></i>`}${icon(i)}<span>${t}</span></li>`)}</ul>
      <div class="space"></div>
      <div class="bar">
        <svg viewBox="0 0 4 5"><path d="M3 0L1 2.500 3 5" fill="none" stroke="#444"/></svg>
        <div class="track"><div class="thumb"></div></div>
        <svg viewBox="0 0 4 5"><path d="M1 0l2 2.500L1 5" fill="none" stroke="#444"/></svg>
      </div>
      <button class="handle" aria-label="Zwiń panel"><i></i></button>
    </div>`;
  }
}

const PITCH_X = 98.3;
const PITCH_Y = 11.35;
const at = (n: number, body: unknown) =>
  svg`<g transform="translate(${(n * PITCH_X).toFixed(1)} ${(n * PITCH_Y).toFixed(1)})">${body}</g>`;

const hole = svg`
  <ellipse cx="0" cy="0" rx="14" ry="9" fill="url(#cone)" class="e"/>
  <path d="M-7 5.500C-7-.5 7-.5 6.500 5.500 4 9-4 9-7 5.500z" fill="#007f10" class="e"/>
  <path d="M-5.500 6.300C-4 2 4 2 5.500 6.300 3 8.600-3 8.600-5.500 6.300z" fill="#fff"/>`;

const postTop = svg`
  <path class="b" d="M371 215L373.500 195Q374 190.500 378 190.500L388 191.500Q391.500 192 391.200 196L387 215z"/>
  <path class="g" d="M371 215Q379 213 387.300 215.500L386.800 219Q385 221 381 220.800L373 220.200Q370 219 371 215z"/>
  <path class="l" d="M374 214.500L377 192M384.500 215L388 193M388 215L391.500 199M371 215Q379 213 387.300 215.500"/>
  <path class="e n" d="M361 300L370.500 219 373.500 195Q374 190.500 378 190.500L388 191.500Q392 192 391.700 196L388 302"/>`;

const post = svg`
  <path class="s" d="M370.500 219L373.500 195Q374 190.500 378 190.500L388 191.500Q392 192 391.700 196L388 302Q387 315 381 325L360 325 361 300z"/>
  <path class="d" d="M371 220L384 221 384.500 327 356 330Q361 325 361.500 300z"/>
  <path class="m" d="M371 220L373 220 365 300Q364 318 360 325L359 326Q361.500 318 361.500 300z"/>
  <path class="m" d="M384.500 220L391 204 388 302 386 321 381 325z"/>
  <path class="l" d="M373 221L364.500 296Q363 318 358 326M382.700 221L380.500 324M385 220L386.500 316M390.300 209L387.500 302M387.500 217L388 300"/>
  ${postTop}`;

const endPost = svg`
  <path class="s e" d="M370.500 219L373.500 195Q374 190.500 378 190.500L388 191.500Q392 192 391.700 196L387.800 313 386.500 320Q385.500 335 382 335L375 334.500 361 325 361 300z"/>
  <path class="d" d="M371 220L383.500 221 381.500 335 375 334.500 356 330Q361 325 361.500 300z"/>
  <path class="m" d="M371 220L373 220 365 300Q364 318 360 325L357 329Q361.500 318 361.500 300z"/>
  <path class="m" d="M384 221L387.500 217 385.500 320 382 334.500z"/>
  <path class="l" d="M373 221L364.500 296Q363 318 358 328M382.500 221L380 334M384.500 220L382 334M387.500 217L386 312M386 318L382.500 334"/>
  ${postTop}
  <path class="e n" d="M388 302L387.500 313Q386 335 382 335L375 334.500"/>`;

const bar = svg`
  <path class="b e" d="M386.700 301.700L460 310 457 332 455 336 391 328.500Q382 327 380 323L386 316z"/>
  <path class="g" d="M381 323L385 321 388 324 453 331.500 458 330 461 331Q459 337 452 338L390 331Q381 330 379.500 324z"/>
  <path class="e n" d="M380 320Q379 330 390 331L452 338.500Q458 338 461 331"/>
  <path class="l" d="M385 324L453 332Q457 331.500 459 326M391 303L387 323 388 330M457 310L453 332 452 338M460 310L457 330"/>`;

const plate = svg`
  <path class="d e" d="M467 342L463 374 463 385Q464 389 470 390.300L550 398.600Q558 398.600 560 393L561.500 384 567 354z"/>
  <path class="b e" d="M470 338L484 300 488 271 563 279.500 556 330 566.500 352 560.500 384Q557 391 549 391.500L472 383Q464 382 464.500 374z"/>
  <path class="g" d="M468.500 342L464 374Q464 383 472 384.500L549 393Q558 392 560.500 384L566.500 353 563.500 352 558.500 381Q556 387 549 388.500L473 380Q467 379 467.500 373L472 342z"/>
  <path class="l" d="M472 342L467.500 373Q467 379 473 380L549 388.500Q556 387 558.500 381L563.500 352M473 380L471.500 390M549 388.500L549.500 398"/>
  <g transform="translate(526.500 294.300)">${hole}</g>
  <g transform="translate(514.700 364.300)">${hole}</g>`;

const stepLeft = svg`
  <path class="g e" d="M485 310L490 313.500 486.500 337Q484 342 478 341.700L468.500 342.300 466 345.500Q463 340 470 337L481 336.500Q484 335 485 328z"/>
  <path class="l" d="M489 314L484 332Q483 337 478 337.500M480 336.500L480.500 341.500"/>`;
const stepRight = svg`
  <path class="g e" d="M558 318L554 325 551 345Q551 349 555 350L563 351Q566.500 352 566 356L569 354Q571 349 565 347L557 345Q555 344 556 338z"/>
  <path class="l" d="M554.500 325Q553 340 556 345M555 350L556.500 345"/>`;

@customElement("sw-viewport")
class SwViewport extends LitElement {
  static styles = [shared, css`
    :host { display: block; position: relative; background: #fff; min-width: 0; min-height: 0; overflow: hidden; }
    .model { display: block; width: 100%; height: 100%; }
    .b { fill: #00ff1a; } .d { fill: #007c0d; } .m { fill: #009012; } .s { fill: #00a014; } .g { fill: #00dc18; }
    .e { stroke: #002b04; stroke-width: 1; } .n { fill: none; }
    .l { fill: none; stroke: #003d06; stroke-width: .600; }
    .axis { font: 5px "Noto Sans", sans-serif; }
    .hud { position: absolute; top: 3px; left: 351px; display: flex; align-items: center; }
    .hud button { width: 13px; height: 10px; }
    .hud button.menu { width: 20px; gap: 5px; padding-left: 1px; }
    .hud .caret { border-width: 1px; border-top-width: 2px; }
    .pane { position: absolute; top: 15px; right: 1px; width: 13px; border: 1px solid #a8a8aa; background: #cfcfd0; }
    .pane button { width: 100%; height: 13px; border-bottom: 1px solid #a8a8aa; }
    .pane button:last-child { border-bottom: 0; }
    .pane button.on { background: #fff; }
  `];
  render() {
    const hud: [string, boolean][] = [["zoomFit", false], ["zoomArea", false], ["zoomPrev", false], ["section", false], ["hudView", false], ["orient", true], ["display", true], ["eye", true], ["appear", false], ["scene", true], ["monitor", true]];
    const pane = ["globe", "home", "library", "explorer", "palette", "ball", "manager"];
    return html`
      <svg class="model" viewBox="127 74 897 445" role="img" aria-label="Model 3D">
        <defs><linearGradient id="cone"><stop offset="0" stop-color="#008a11"/><stop offset="1" stop-color="#00e51a"/></linearGradient></defs>
        ${at(0, plate)}${at(3, plate)}
        <path class="d e" d="M278 318L470 337 469 346 281 324.800Q277.500 324 277.500 321z"/>
        <path class="d e" d="M570 345L766 366 764.500 380 570 357.800 566 354z"/>
        <path class="b e" d="M283 292Q284 290 287 290.300L361 298.700 358 322 356 326 282 317.500 278 320z"/>
        <path class="g" d="M283 292L280.500 315 283 315.500 354 323.500 359 322 361 323Q359 328 353 328L281 320 278 319z"/>
        <path class="e n" d="M277.700 321L281 295Q282 290 287 290.300M278 319.500L353 327.800Q358 328 361 323"/>
        <path class="l" d="M286 291L282.500 315 281.500 323M282 315.500L354 323.500M358.500 299L354 323.500 353.500 328M361 299L357 322"/>
        ${at(0, bar)}${at(2, bar)}${at(3, bar)}
        ${[0, 1, 2, 3, 4].map((n) => at(n, post))}
        ${at(5, endPost)}
        ${at(0, stepLeft)}${at(3, stepLeft)}${at(0, stepRight)}${at(3, stepRight)}
        <path d="M149 488V477" stroke="#007a10" stroke-width="1.500"/><path d="M146.500 480l2.500-6 2.500 6z" fill="#005e0c"/>
        <path d="M149 488.500l10 1" stroke="#d00" stroke-width="1.500"/><path d="M158 487l7 3-7 2z" fill="#c00"/>
        <path d="M149 488l-1.500 8" stroke="#00c" stroke-width="1.500"/><path d="M145 494l5 .5-3.500 5z" fill="#00a"/>
        <text class="axis" x="148" y="473" fill="#2a8a2a">Y</text><text class="axis" x="167" y="491" fill="#e22">X</text><text class="axis" x="145" y="501" fill="#22d">Z</text>
      </svg>
      <div class="hud">${hud.map(([i, m]) => html`<button class=${m ? "menu" : ""} aria-label=${i}>${icon(i)}${m ? html`<span class="caret"></span>` : nothing}</button>`)}</div>
      <div class="pane">${pane.map((i) => html`<button class=${i === "library" ? "on" : ""} aria-label=${i}>${icon(i)}</button>`)}</div>`;
  }
}

@customElement("sw-footer")
class SwFooter extends LitElement {
  @property({ type: String }) mode = "Edycja Część";
  static styles = [shared, css`
    :host { display: block; font-size: 6px; color: #222; background: #f4f4f5; border-top: 1px solid #a8a8aa; }
    .views { display: flex; height: 9px; align-items: stretch; }
    .nav { display: grid; grid-template-columns: repeat(4, 1fr); width: 36px; background: #a7a9ac; color: #7e8083; font-size: 5px; }
    .nav button { border-right: 1px solid #909295; }
    .view { background: #d6d6d7; border-right: 1px solid #a5a5a7; padding: 0 5px; white-space: nowrap; }
    .view.on { background: #f4f4f5; border-right: 0; font-weight: 700; padding: 0 6px; }
    .tools { display: flex; align-items: center; height: 16px; }
    .dots { width: 2px; height: 13px; margin-left: 2px; border-left: 1px dotted #888; }
    .pre { display: grid; grid-template-columns: repeat(3, 1fr); width: 44px; margin-left: 3px; }
    .select { display: flex; height: 14px; width: 21px; border: 1px solid #999; }
    .select .main { width: 14px; background: #b0b0b0; }
    .select .drop { flex: 1; background: #fff; }
    .selx { width: 17px; }
    .sep { width: 1px; height: 14px; background: #b5b5b7; }
    .filters { display: grid; grid-template-columns: repeat(29, 1fr); width: 419px; margin-left: 3px; }
    .status { display: flex; align-items: center; height: 10px; border-top: 1px solid #b5b5b7; white-space: nowrap; padding-right: 3px; }
    .grow { flex: 1; }
    .mode { width: 100px; }
    .units { width: 48px; }
    .up { border: 2px solid transparent; border-bottom-color: #555; border-top: 0; }
    .tag { margin-left: 14px; color: #999; }
    .tag .ic { width: 7px; height: 7px; }
  `];
  render() {
    const filters = ["bVertex", "bEdge", "bFace", "bSurf", "bBody", "bAxis", "bPlane", "bPoint", "bSketch", "bSeg", "bMid", "bCenter", "bCline", "bDim", "bFin", "bGtol", "bMag", "bNote", "bWeld", "bAng", "bDatum", "bCosm", "bBlock", "bMass", "bConn", "bRoute", "bMeshF", "bMeshE", "bMeshV"];
    return html`
      <div class="views">
        <div class="nav">${["|◂", "◂", "▸", "▸|"].map((s) => html`<button>${s}</button>`)}</div>
        <button class="view on">Model</button><button class="view">Widoki 3D</button><button class="view">Badanie ruchu 1</button>
      </div>
      <div class="tools">
        <span class="dots"></span>
        <div class="pre">${["fOff", "fOff2", "fOn"].map((i) => html`<button aria-label=${i}>${icon(i)}</button>`)}</div>
        <div class="select"><button class="main" aria-label="Wybierz">${icon("cursor")}</button><button class="drop" aria-label="Opcje"><span class="caret"></span></button></div>
        <button class="selx" aria-label="Odwróć wybór">${icon("selOff")}</button>
        <span class="sep"></span>
        <div class="filters">${filters.map((i) => html`<button aria-label=${i}>${icon(i)}</button>`)}</div>
        <span class="sep"></span>
      </div>
      <div class="status">
        <span>SOLIDWORKS Premium 2023 SP0.1</span><span class="grow"></span>
        <span class="mode">${this.mode}</span><span class="units">Dostosowany</span><span class="up"></span>
        <button class="tag" aria-label="Tagi">${icon("dockR")}</button>
      </div>`;
  }
}

@customElement("app-root")
class AppRoot extends LitElement {
  static styles = css`
    :host {
      display: flex; flex-direction: column; height: 100vh; overflow: hidden;
      font-family: "Open Sans", "Noto Sans", sans-serif; font-size: 6px; line-height: 8px; color: #222; background: #f4f4f5;
    }
    .work { flex: 1; min-height: 0; display: grid; grid-template-columns: 127px minmax(0, 1fr); grid-template-rows: minmax(0, 1fr); }
    sw-tree { z-index: 1; }
  `;
  render() {
    return html`<sw-titlebar></sw-titlebar><sw-ribbon></sw-ribbon><sw-tabs></sw-tabs>
      <div class="work"><sw-tree></sw-tree><sw-viewport></sw-viewport></div>
      <sw-footer></sw-footer>`;
  }
}
